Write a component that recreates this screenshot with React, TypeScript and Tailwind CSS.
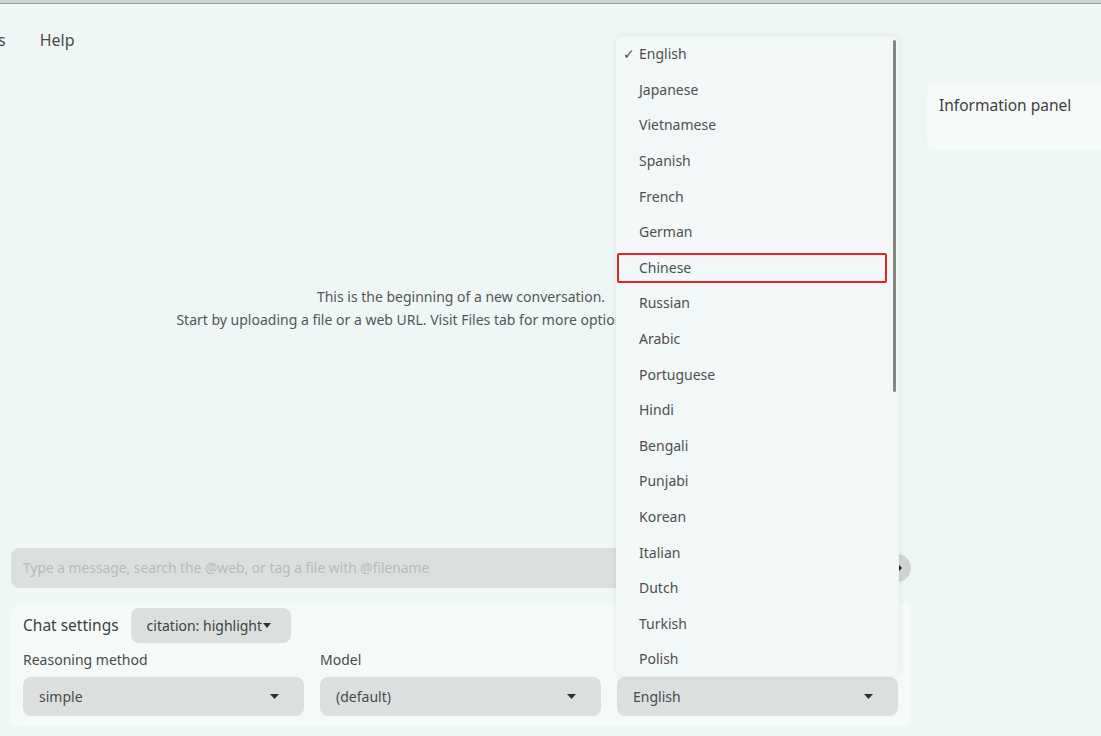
import React from "react";

const languages = [
  "English",
  "Japanese",
  "Vietnamese",
  "Spanish",
  "French",
  "German",
  "Chinese",
  "Russian",
  "Arabic",
  "Portuguese",
  "Hindi",
  "Bengali",
  "Punjabi",
  "Korean",
  "Italian",
  "Dutch",
  "Turkish",
  "Polish",
];

function Caret() {
  return (
    <svg width="9" height="5" viewBox="0 0 9 5" className="shrink-0">
      <path d="M0 0 L9 0 L4.5 5 Z" fill="#2f2f2f" />
    </svg>
  );
}

function Select({ value }: { value: string }) {
  return (
    <div className="flex h-[39px] w-full shrink-0 items-center justify-between rounded-lg bg-[#dbe0df] pl-[16px] pr-[25px] text-[14px] text-[#4a4a4a]">
      <span>{value}</span>
      <Caret />
    </div>
  );
}

export default function App() {
  return (
    <div
      className="relative flex h-[736px] w-[1101px] flex-col overflow-hidden bg-[#eff7f6] text-[#4a4a4a]"
      style={{ fontFamily: '"Noto Sans", "Liberation Sans", sans-serif' }}
    >
      {/* top window edge */}
      <div className="h-[4px] shrink-0 border-b border-[#9c9f9c] bg-[#cdd0cd]" />

      <div className="flex min-h-0 flex-1 gap-[16px]">
        {/* Left column */}
        <div className="flex w-[911px] shrink-0 flex-col">
          {/* nav */}
          <div className="mt-[26px] flex h-[20px] items-center text-[16px] text-[#4a4a4a]">
            <span className="-ml-[2px]">s</span>
            <span className="ml-[34px]">Help</span>
          </div>

          {/* conversation area */}
          <div className="ml-[11px] flex flex-1 flex-col items-center justify-center whitespace-nowrap text-[14px] leading-[23px] text-[#555]">
            <div className="mt-[18px]">This is the beginning of a new conversation.</div>
            <div>
              Start by uploading a file or a web URL. Visit Files tab for more options (e.g., GraphRAG).
            </div>
          </div>

          {/* input row */}
          <div className="ml-[11px] flex h-[40px] items-center">
            <div className="flex h-[40px] flex-1 items-center rounded-lg bg-[#dbe0df] pl-[12px] text-[13.8px] text-[#b4bbba]">
              Type a message, search the @web, or tag a file with @filename
            </div>
            <div className="-ml-[10px] flex h-[28px] w-[28px] shrink-0 items-center justify-center rounded-full bg-[#cfd4d5]">
              <svg width="10" height="8" viewBox="0 0 10 8">
                <path d="M0 3 H6 V0 L10 4 L6 8 V5 H0 Z" fill="#222" />
              </svg>
            </div>
          </div>

          {/* chat settings */}
          <div className="mb-[10px] ml-[11px] mt-[16px] flex h-[122px] shrink-0 flex-col rounded-lg bg-[#f5faf9] pl-[12px] pr-[13px]">
            <div className="mt-[4px] flex h-[35px] items-center gap-[12px]">
              <span className="text-[15.5px] text-[#3f3f3f]">Chat settings</span>
              <div className="flex h-[35px] w-[160px] items-center rounded-lg bg-[#dbe0df] pl-[16px] text-[14px] text-[#3f3f3f]">
                citation: highlight
                <svg width="8" height="5" viewBox="0 0 8 5" className="ml-[1px]">
                  <path d="M0 0 L8 0 L4 5 Z" fill="#2f2f2f" />
                </svg>
              </div>
            </div>
            <div className="mt-[8px] flex gap-[16px] text-[14px] text-[#4a4a4a]">
              <div className="flex flex-1 flex-col gap-[8px]">
                <span className="h-[18px] leading-[18px]">Reasoning method</span>
                <Select value="simple" />
              </div>
              <div className="flex flex-1 flex-col gap-[8px]">
                <span className="h-[18px] leading-[18px]">Model</span>
                <Select value="(default)" />
              </div>
              <div className="flex flex-1 flex-col gap-[8px]">
                <span className="h-[18px] leading-[18px]">&nbsp;</span>
                <Select value="English" />
              </div>
            </div>
          </div>
        </div>

        {/* Right column */}
        <div className="flex flex-1 flex-col">
          <div className="mt-[80px] h-[66px] rounded-l-lg bg-[#f5faf9] pl-[12px] pt-[10px] text-[15.5px] text-[#3f3f3f]">
            Information panel
          </div>
        </div>
      </div>

      {/* language dropdown overlay */}
      <div className="absolute left-[616px] top-[36px] h-[640px] w-[283px] overflow-hidden rounded-lg bg-[#f2f8f7] shadow-[0_0_6px_rgba(0,0,0,0.08)]">
        {languages.map((lang, i) => (
          <div
            key={lang}
            className="relative flex h-[35.6px] items-center text-[14px] text-[#4f4f4f]"
          >
            {i === 0 ? (
              <span className="flex pl-[7px]">
                <span className="w-[16px]">✓</span>
                {lang}
              </span>
            ) : (
              <span className="pl-[23px]">{lang}</span>
            )}
            {lang === "Chinese" && (
              <div className="absolute left-[1px] top-[3px] h-[30px] w-[270px] rounded-[2px] border-2 border-[#e5202a]" />
            )}
          </div>
        ))}
        <div className="absolute left-[277px] top-[4px] h-[352px] w-[3px] rounded-full bg-[#86857f]" />
      </div>
    </div>
  );
}
